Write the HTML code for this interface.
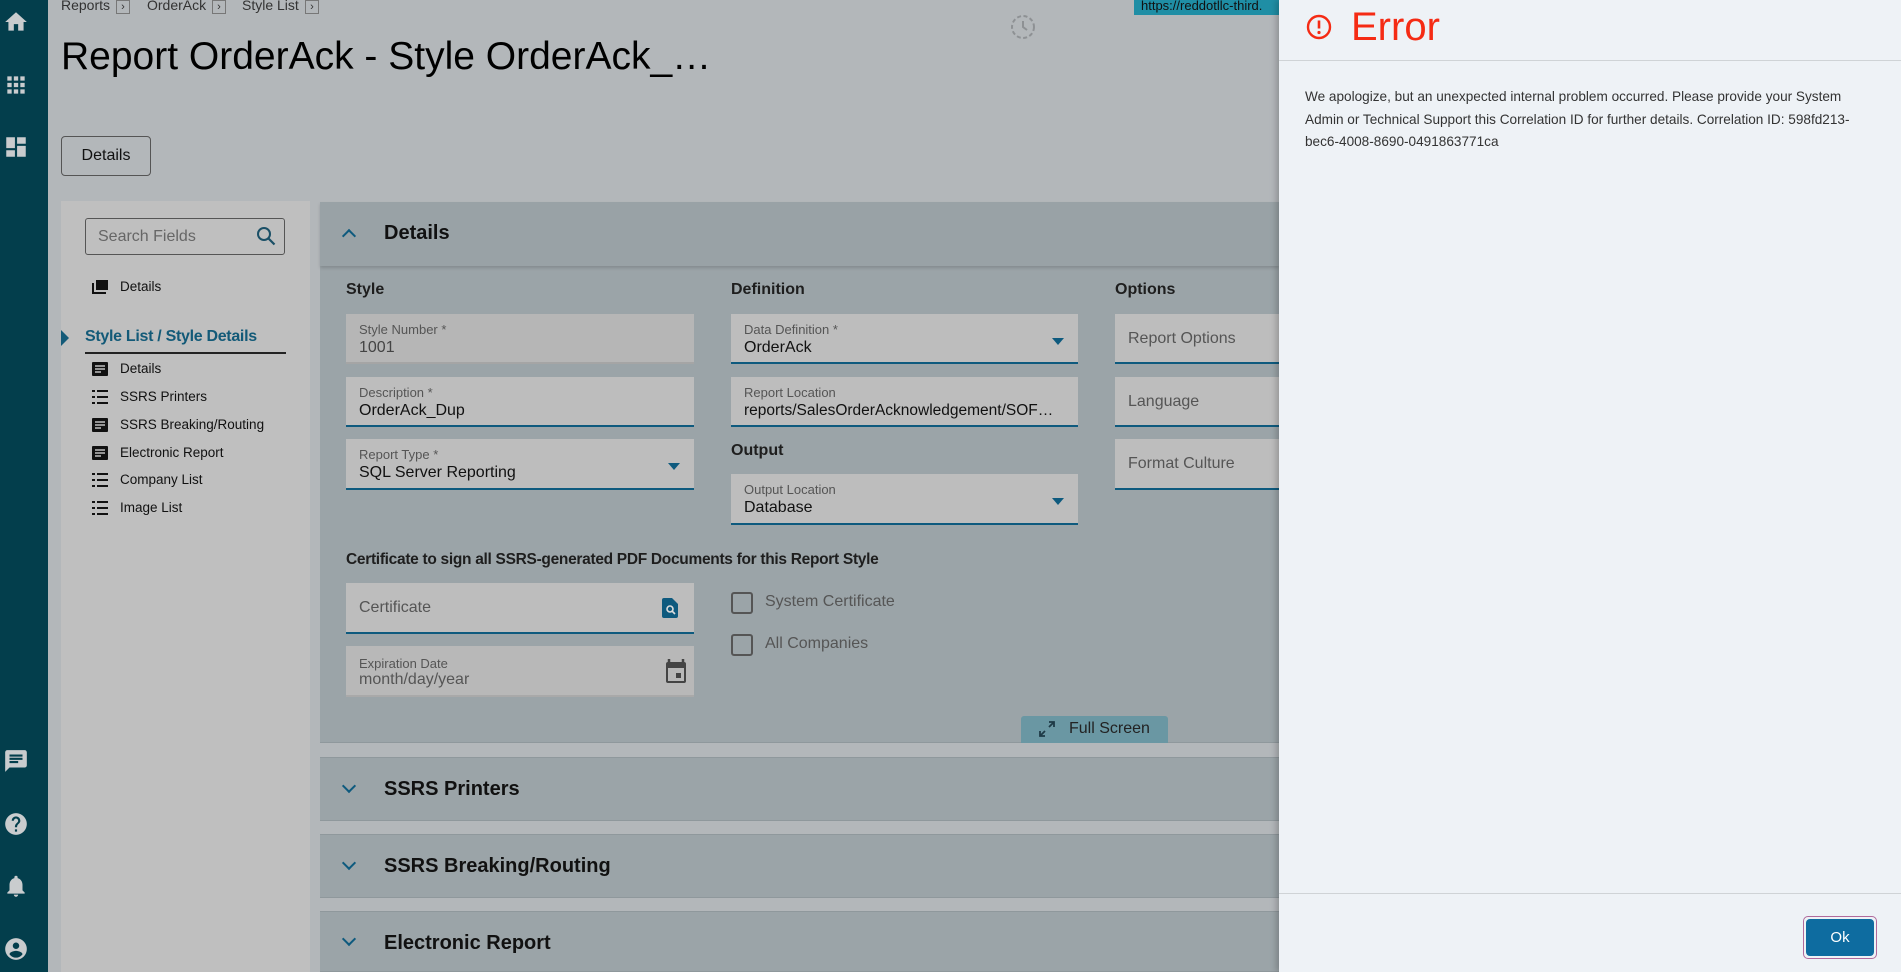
<!DOCTYPE html>
<html><head><meta charset="utf-8"><style>
*{box-sizing:border-box;margin:0;padding:0}
body{width:1901px;height:972px;overflow:hidden;background:#b3b7ba;font-family:"Liberation Sans",sans-serif;position:relative;color:#111}
.a{position:absolute}
.side{left:0;top:0;width:48px;height:972px;background:#033e4c}
.ic{position:absolute;left:3px;width:26px;height:26px}
.bc{top:-3px;font-size:14px;color:#333}
.bx{top:0;width:14px;height:14px;border:1px solid #777;font-size:11px;line-height:12px;text-align:center;color:#333}
.fld{position:absolute;background:#bdbdbd;border-bottom:2px solid #0e5a7e}
.lbl{position:absolute;left:13px;top:8px;font-size:13px;color:#555}
.val{position:absolute;left:13px;top:25px;font-size:16px;color:#111;white-space:nowrap}
.ph{position:absolute;left:13px;top:16px;font-size:16px;color:#555}
.dd{position:absolute;right:14px;top:24px;width:0;height:0;border-left:6px solid transparent;border-right:6px solid transparent;border-top:7px solid #0e5a7e}
.h{font-size:16px;font-weight:bold;color:#1e1e1e}
.nav{position:absolute;left:120px;font-size:13.5px;color:#111}
.ni{position:absolute;left:92px;width:16px;height:14px}
.sec{position:absolute;left:320px;width:959px;background:#9ba4a8;border-top:1px solid #8f989c;border-bottom:1px solid #8f989c}
.sec span{position:absolute;left:64px;font-size:20px;font-weight:bold;color:#111}
.chev{position:absolute;left:344px;width:10px;height:10px;border-right:2px solid #0e5a7e;border-bottom:2px solid #0e5a7e}
</style></head><body>
<div class="a side">
 <svg class="ic" style="top:9px" viewBox="0 0 24 24"><path d="M10 20v-6h4v6h5v-8h3L12 3 2 12h3v8z" fill="#c9ccce"/></svg>
 <svg class="ic" style="top:72px" viewBox="0 0 24 24" fill="#c9ccce"><path d="M4 4h4v4H4zM10 4h4v4h-4zM16 4h4v4h-4zM4 10h4v4H4zM10 10h4v4h-4zM16 10h4v4h-4zM4 16h4v4H4zM10 16h4v4h-4zM16 16h4v4h-4z"/></svg>
 <svg class="ic" style="top:134px" viewBox="0 0 24 24" fill="#c9ccce"><path d="M3 13h8V3H3zm0 8h8v-6H3zm10 0h8V11h-8zm0-18v6h8V3z"/></svg>
 <svg class="ic" style="top:748px" viewBox="0 0 24 24" fill="#c9ccce"><path d="M20 2H4c-1.1 0-2 .9-2 2v18l4-4h14c1.1 0 2-.9 2-2V4c0-1.1-.9-2-2-2zM6 9h12v2H6zm8 5H6v-2h8zm4-6H6V6h12z"/></svg>
 <svg class="ic" style="top:811px" viewBox="0 0 24 24" fill="#c9ccce"><path d="M12 2a10 10 0 100 20 10 10 0 000-20zm1 17h-2v-2h2zm2.07-7.75l-.9.92C13.45 12.9 13 13.5 13 15h-2v-.5c0-1.1.45-2.1 1.17-2.83l1.240-1.26A2 2 0 1010 9H8a4 4 0 118 0c0 .88-.36 1.68-.93 2.25z"/></svg>
 <svg class="ic" style="top:873px" viewBox="0 0 24 24" fill="#c9ccce"><path d="M12 22c1.1 0 2-.9 2-2h-4c0 1.1.9 2 2 2zm6-6v-5c0-3.07-1.64-5.64-4.5-6.32V4a1.5 1.5 0 00-3 0v.68C7.630 5.36 6 7.92 6 11v5l-2 2v1h16v-1z"/></svg>
 <svg class="ic" style="top:936px" viewBox="0 0 24 24" fill="#c9ccce"><path d="M12 2a10 10 0 100 20 10 10 0 000-20zm0 4a3 3 0 110 6 3 3 0 010-6zm0 14c-2.5 0-4.7-1.3-6-3.2.03-2 4-3.1 6-3.1s5.97 1.1 6 3.1C16.7 18.7 14.5 20 12 20z"/></svg>
</div>

<div class="a bc" style="left:61px">Reports</div><div class="a bx" style="left:116px">›</div>
<div class="a bc" style="left:147px">OrderAck</div><div class="a bx" style="left:212px">›</div>
<div class="a bc" style="left:242px">Style List</div><div class="a bx" style="left:305px">›</div>
<svg class="a" style="left:1010px;top:14px" width="26" height="26" viewBox="0 0 26 26"><circle cx="13" cy="13" r="11" fill="none" stroke="#8e9194" stroke-width="2" stroke-dasharray="4 2.5"/><path d="M13 7v6l4 3" fill="none" stroke="#8e9194" stroke-width="2"/></svg>
<div class="a" style="left:1134px;top:0;width:150px;height:15px;background:#1f8ea5;font-size:13px;line-height:11px;padding-left:7px;color:#111;overflow:hidden;white-space:nowrap">https://reddotllc-third.</div>

<div class="a" style="left:61px;top:35px;font-size:39px;color:#000;white-space:nowrap">Report OrderAck - Style OrderAck_…</div>
<div class="a" style="left:61px;top:136px;width:90px;height:40px;border:1px solid #555;border-radius:4px;font-size:16px;line-height:38px;text-align:center">Details</div>

<div class="a" style="left:61px;top:201px;width:249px;height:771px;background:#bfbfbf"></div>
<div class="a" style="left:85px;top:218px;width:200px;height:37px;border:1px solid #555;border-radius:3px;font-size:16px;line-height:35px;padding-left:12px;color:#666">Search Fields</div>
<svg class="a" style="left:256px;top:226px" width="20" height="20" viewBox="0 0 20 20"><circle cx="8" cy="8" r="6" fill="none" stroke="#1a4f66" stroke-width="2"/><path d="M12.5 12.5l6 6" stroke="#1a4f66" stroke-width="2.2"/></svg>
<svg class="ni" style="top:280px" viewBox="0 0 16 14"><rect x="4" y="0" width="12" height="10" fill="#111"/><path d="M1 3v10h13" fill="none" stroke="#111" stroke-width="2"/></svg>
<div class="nav" style="top:279px">Details</div>
<div class="a" style="left:61px;top:330px;border-top:8px solid transparent;border-bottom:8px solid transparent;border-left:8px solid #135a78"></div>
<div class="a" style="left:85px;top:328px;font-size:16px;font-weight:bold;color:#135a78;letter-spacing:-0.3px">Style List / Style Details</div>
<div class="a" style="left:85px;top:352px;width:201px;height:2px;background:#222"></div>
<svg class="ni" style="top:362px" viewBox="0 0 16 14"><rect width="16" height="14" rx="1" fill="#111"/><path d="M3 4h10M3 7h10M3 10h6" stroke="#bfbfbf" stroke-width="1.5"/></svg><div class="nav" style="top:361px">Details</div>
<svg class="ni" style="top:390px" viewBox="0 0 16 14"><path d="M0 1h3M5 1h11M0 7h3M5 7h11M0 13h3M5 13h11" stroke="#111" stroke-width="2"/></svg><div class="nav" style="top:389px">SSRS Printers</div>
<svg class="ni" style="top:418px" viewBox="0 0 16 14"><rect width="16" height="14" rx="1" fill="#111"/><path d="M3 4h10M3 7h10M3 10h6" stroke="#bfbfbf" stroke-width="1.5"/></svg><div class="nav" style="top:417px">SSRS Breaking/Routing</div>
<svg class="ni" style="top:446px" viewBox="0 0 16 14"><rect width="16" height="14" rx="1" fill="#111"/><path d="M3 4h10M3 7h10M3 10h6" stroke="#bfbfbf" stroke-width="1.5"/></svg><div class="nav" style="top:445px">Electronic Report</div>
<svg class="ni" style="top:473px" viewBox="0 0 16 14"><path d="M0 1h3M5 1h11M0 7h3M5 7h11M0 13h3M5 13h11" stroke="#111" stroke-width="2"/></svg><div class="nav" style="top:472px">Company List</div>
<svg class="ni" style="top:501px" viewBox="0 0 16 14"><path d="M0 1h3M5 1h11M0 7h3M5 7h11M0 13h3M5 13h11" stroke="#111" stroke-width="2"/></svg><div class="nav" style="top:500px">Image List</div>

<div class="sec" style="top:202px;height:541px"></div>
<div class="a" style="left:320px;top:202px;width:959px;height:64px;background:#99a2a6;box-shadow:0 2px 3px rgba(0,0,0,.15)"></div>
<div class="chev" style="top:231px;transform:rotate(-135deg)"></div>
<div class="a" style="left:384px;top:222px;font-size:20px;font-weight:bold">Details</div>
<div class="a h" style="left:346px;top:281px">Style</div>
<div class="a h" style="left:731px;top:281px">Definition</div>
<div class="a h" style="left:1115px;top:281px">Options</div>

<div class="fld" style="left:346px;top:314px;width:348px;height:50px;border-bottom-color:#a5a5a5;background:#b6b6b6"><div class="lbl">Style Number *</div><div class="val" style="color:#444">1001</div></div>
<div class="fld" style="left:346px;top:377px;width:348px;height:50px"><div class="lbl">Description *</div><div class="val">OrderAck_Dup</div></div>
<div class="fld" style="left:346px;top:439px;width:348px;height:51px"><div class="lbl">Report Type *</div><div class="val">SQL Server Reporting</div><div class="dd"></div></div>

<div class="fld" style="left:731px;top:314px;width:347px;height:50px"><div class="lbl">Data Definition *</div><div class="val">OrderAck</div><div class="dd"></div></div>
<div class="fld" style="left:731px;top:377px;width:347px;height:50px;overflow:hidden"><div class="lbl">Report Location</div><div class="val" style="font-size:15.5px">reports/SalesOrderAcknowledgement/SOF…</div></div>
<div class="a h" style="left:731px;top:442px">Output</div>
<div class="fld" style="left:731px;top:474px;width:347px;height:51px"><div class="lbl">Output Location</div><div class="val">Database</div><div class="dd"></div></div>

<div class="fld" style="left:1115px;top:314px;width:170px;height:50px"><div class="ph">Report Options</div></div>
<div class="fld" style="left:1115px;top:377px;width:170px;height:50px"><div class="ph">Language</div></div>
<div class="fld" style="left:1115px;top:439px;width:170px;height:51px"><div class="ph">Format Culture</div></div>

<div class="a h" style="left:346px;top:551px;font-size:15.5px;letter-spacing:-0.3px">Certificate to sign all SSRS-generated PDF Documents for this Report Style</div>
<div class="fld" style="left:346px;top:583px;width:348px;height:51px"><div class="ph">Certificate</div>
<svg style="position:absolute;right:16px;top:15px" width="16" height="20" viewBox="0 0 16 20"><path d="M0 2a2 2 0 012-2h8l6 6v12a2 2 0 01-2 2H2a2 2 0 01-2-2z" fill="#0e5a7e"/><circle cx="8" cy="11" r="3" fill="none" stroke="#ddd" stroke-width="1.6"/><path d="M10 13l3 3" stroke="#ddd" stroke-width="1.6"/></svg></div>
<div class="fld" style="left:346px;top:646px;width:348px;height:51px;border-bottom-color:#a9a9a9;background:#b8b8b8"><div class="lbl" style="top:10px">Expiration Date</div><div class="val" style="color:#555">month/day/year</div>
<svg style="position:absolute;right:6px;top:12px" width="24" height="26" viewBox="0 0 24 26"><path d="M5 1v4M19 1v4" stroke="#444" stroke-width="2.5"/><rect x="2" y="4" width="20" height="21" rx="2" fill="#444"/><rect x="4" y="10" width="16" height="13" fill="#b8b8b8"/><rect x="12" y="15" width="5" height="5" fill="#444"/></svg></div>

<div class="a" style="left:731px;top:592px;width:22px;height:22px;border:2px solid #555;border-radius:3px"></div>
<div class="a" style="left:765px;top:593px;font-size:16px;color:#555">System Certificate</div>
<div class="a" style="left:731px;top:634px;width:22px;height:22px;border:2px solid #555;border-radius:3px"></div>
<div class="a" style="left:765px;top:635px;font-size:16px;color:#555">All Companies</div>

<div class="a" style="left:1021px;top:716px;width:147px;height:27px;background:#6a97a3;border-radius:3px 3px 0 0;font-size:16px;color:#222;line-height:25px;padding-left:48px">Full Screen</div>
<svg class="a" style="left:1039px;top:721px" width="16" height="16" viewBox="0 0 16 16"><path d="M10 1h5v5M15 1l-5 5M6 15H1v-5M1 15l5-5" fill="none" stroke="#1e3a46" stroke-width="1.8"/></svg>

<div class="sec" style="top:757px;height:64px"><span style="top:20px">SSRS Printers</span></div><div class="chev" style="top:781px;transform:rotate(45deg)"></div>
<div class="sec" style="top:834px;height:64px"><span style="top:20px">SSRS Breaking/Routing</span></div><div class="chev" style="top:858px;transform:rotate(45deg)"></div>
<div class="sec" style="top:911px;height:61px"><span style="top:20px">Electronic Report</span></div><div class="chev" style="top:934px;transform:rotate(45deg)"></div>

<div class="a" style="left:1279px;top:0;width:622px;height:972px;background:#eef2f6;box-shadow:-3px 0 6px rgba(0,0,0,.2)"></div>
<svg class="a" style="left:1305px;top:13px" width="28" height="28" viewBox="0 0 28 28"><circle cx="14" cy="14" r="11" fill="none" stroke="#f52b14" stroke-width="2.4"/><path d="M14 7.5v8" stroke="#f52b14" stroke-width="2.6"/><circle cx="14" cy="19.5" r="1.6" fill="#f52b14"/></svg>
<div class="a" style="left:1351px;top:5px;font-size:40px;color:#f52b14">Error</div>
<div class="a" style="left:1279px;top:60px;width:622px;height:1px;background:#cfd3d6"></div>
<div class="a" style="left:1305px;top:86px;font-size:13.6px;line-height:22.5px;color:#333;white-space:nowrap">We apologize, but an unexpected internal problem occurred. Please provide your System<br>Admin or Technical Support this Correlation ID for further details. Correlation ID: 598fd213-<br>bec6-4008-8690-0491863771ca</div>
<div class="a" style="left:1279px;top:893px;width:622px;height:1px;background:#cfd3d6"></div>
<div class="a" style="left:1803px;top:916px;width:74px;height:43px;border:1px solid #b06a9c;border-radius:5px;padding:2px"><div style="width:100%;height:100%;background:#0e6ca0;border-radius:4px;color:#fff;font-size:15px;text-align:center;line-height:37px">Ok</div></div>
</body></html>
